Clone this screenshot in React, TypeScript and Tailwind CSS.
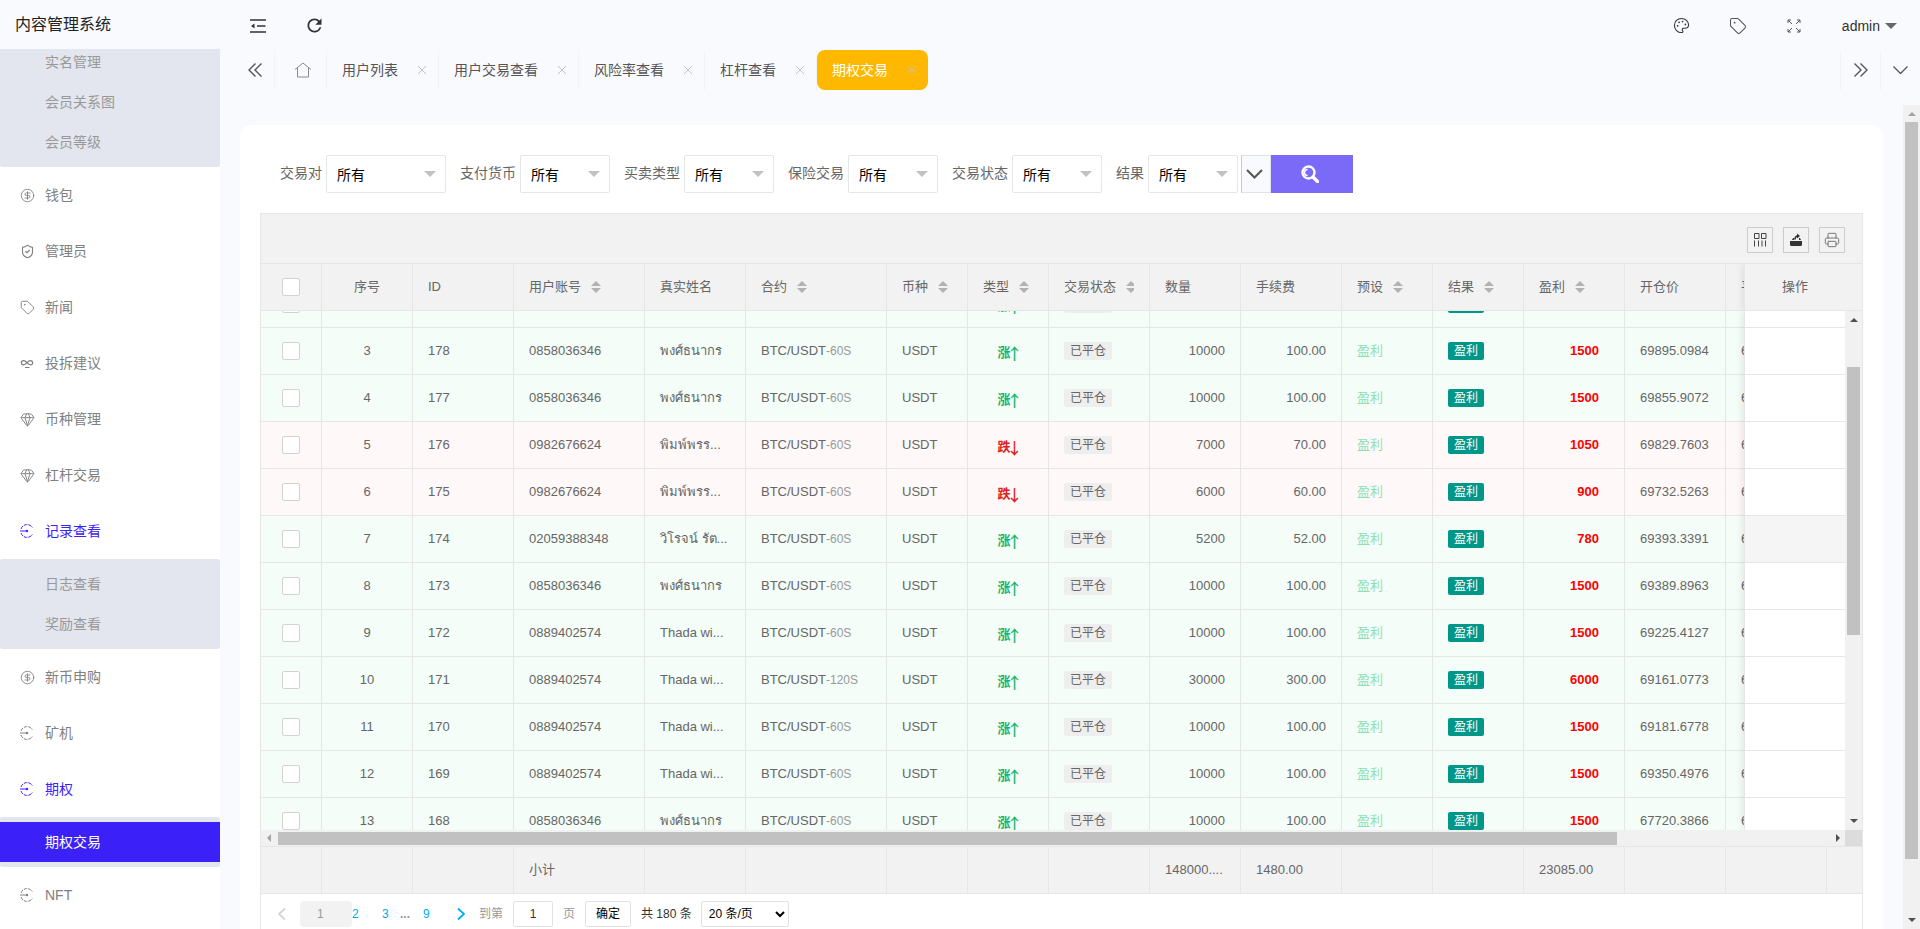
import { useState } from "react";
import type { ReactNode } from "react";
import { CircleDollarSign, Gem, Palette, Printer, ShieldCheck, Tag } from "lucide-react";
import { MdRefresh } from "react-icons/md";
import clsx from "clsx";

type Row = {
  no: string;
  id: string;
  account: string;
  name: string;
  seconds: string;
  up: boolean;
  amount: string;
  fee: string;
  profit: string;
  open: string;
};

const rows: Row[] = [
  { no: "", id: "", account: "", name: "", seconds: "", up: true, amount: "", fee: "", profit: "", open: "" },
  { no: "3", id: "178", account: "0858036346", name: "พงศ์ธนากร", seconds: "-60S", up: true, amount: "10000", fee: "100.00", profit: "1500", open: "69895.0984" },
  { no: "4", id: "177", account: "0858036346", name: "พงศ์ธนากร", seconds: "-60S", up: true, amount: "10000", fee: "100.00", profit: "1500", open: "69855.9072" },
  { no: "5", id: "176", account: "0982676624", name: "พิมพ์พรร...", seconds: "-60S", up: false, amount: "7000", fee: "70.00", profit: "1050", open: "69829.7603" },
  { no: "6", id: "175", account: "0982676624", name: "พิมพ์พรร...", seconds: "-60S", up: false, amount: "6000", fee: "60.00", profit: "900", open: "69732.5263" },
  { no: "7", id: "174", account: "02059388348", name: "วิโรจน์ รัต...", seconds: "-60S", up: true, amount: "5200", fee: "52.00", profit: "780", open: "69393.3391" },
  { no: "8", id: "173", account: "0858036346", name: "พงศ์ธนากร", seconds: "-60S", up: true, amount: "10000", fee: "100.00", profit: "1500", open: "69389.8963" },
  { no: "9", id: "172", account: "0889402574", name: "Thada wi...", seconds: "-60S", up: true, amount: "10000", fee: "100.00", profit: "1500", open: "69225.4127" },
  { no: "10", id: "171", account: "0889402574", name: "Thada wi...", seconds: "-120S", up: true, amount: "30000", fee: "300.00", profit: "6000", open: "69161.0773" },
  { no: "11", id: "170", account: "0889402574", name: "Thada wi...", seconds: "-60S", up: true, amount: "10000", fee: "100.00", profit: "1500", open: "69181.6778" },
  { no: "12", id: "169", account: "0889402574", name: "Thada wi...", seconds: "-60S", up: true, amount: "10000", fee: "100.00", profit: "1500", open: "69350.4976" },
  { no: "13", id: "168", account: "0858036346", name: "พงศ์ธนากร", seconds: "-60S", up: true, amount: "10000", fee: "100.00", profit: "1500", open: "67720.3866" },
];

const columns = [
  { title: "", width: 61 },
  { title: "序号", width: 91, center: true },
  { title: "ID", width: 101 },
  { title: "用户账号", width: 131, sort: true },
  { title: "真实姓名", width: 101 },
  { title: "合约", width: 141, sort: true },
  { title: "币种", width: 81, sort: true },
  { title: "类型", width: 81, sort: true },
  { title: "交易状态", width: 101, sort: true },
  { title: "数量", width: 91, total: "148000...." },
  { title: "手续费", width: 101, total: "1480.00" },
  { title: "预设", width: 91, sort: true },
  { title: "结果", width: 91, sort: true },
  { title: "盈利", width: 101, sort: true, total: "23085.00" },
  { title: "开仓价", width: 101 },
  { title: "平仓价", width: 101 },
  { title: "", width: 101 },
];

const filters = [
  { id: "pair", label: "交易对", wide: true },
  { id: "currency", label: "支付货币" },
  { id: "side", label: "买卖类型" },
  { id: "insurance", label: "保险交易" },
  { id: "status", label: "交易状态" },
  { id: "result", label: "结果" },
];

const tabs = ["用户列表", "用户交易查看", "风险率查看", "杠杆查看", "期权交易"];

const RecordIcon = () => (
  <svg width="14" height="14" viewBox="0 0 14 14" fill="none" stroke="currentColor">
    <path d="M1 5a6.3 6.3 0 0 1 11.5-1.2M1 9a6.3 6.3 0 0 0 11.5 1.2" strokeDasharray="3.6 1" />
    <path d="M0 7h7" />
    <circle cx="7" cy="7" r="1.2" fill="currentColor" stroke="none" />
  </svg>
);

const LoopIcon = () => (
  <svg width="14" height="14" viewBox="0 0 14 14" fill="none" stroke="currentColor" strokeWidth="1.2">
    <path d="M7 6.7C5.8 5.2 4.800 4.600 3.500 4.600a2.100 2.100 0 0 0 0 4.200C4.800 8.800 5.800 8 7 6.700S9.300 4.600 10.500 4.600a2.100 2.100 0 0 1 0 4.200C9.300 8.800 8.400 8.300 7 6.700z" />
    <path d="M5 11.500h4.500" strokeWidth="1" />
  </svg>
);

const ExpandIcon = () => (
  <svg width="14" height="14" viewBox="0 0 14 14" fill="none" stroke="#555">
    <path d="M1 4V1h3M1 1l4 4M10 1h3v3M13 1L9 5M13 10v3h-3M13 13L9 9M4 13H1v-3M1 13l4-4" />
  </svg>
);

const Chevrons = ({ right }: { right?: boolean }) => (
  <svg width="14" height="14" viewBox="0 0 14 14" fill="none" stroke="#555" strokeWidth="1.4">
    {right ? <path d="M0.500 0.500L7 7 0.500 13.500M6.500 0.500L13 7 6.500 13.500" /> : <path d="M7.500 0.500L1 7l6.500 6.500M13.500 0.500L7 7l6.500 6.500" />}
  </svg>
);

const Caret = ({ dir, color }: { dir: "up" | "down" | "left" | "right"; color: string }) => {
  const points = { up: "0,4 4,0 8,4", down: "0,0 8,0 4,4", left: "4,0 4,8 0,4", right: "0,0 4,4 0,8" }[dir];
  const flat = dir === "up" || dir === "down";
  return (
    <svg width={flat ? 8 : 4} height={flat ? 4 : 8} fill={color}>
      <polygon points={points} />
    </svg>
  );
};

const Check = ({ label }: { label: string }) => (
  <input
    type="checkbox"
    aria-label={label}
    className="block mx-auto w-[18px] h-[18px] appearance-none bg-white border border-[#d2d2d2] rounded-xs checked:bg-[#009688]"
  />
);

const ColGroup = () => (
  <colgroup>
    {columns.map((c, i) => (
      <col key={i} style={{ width: c.width }} />
    ))}
  </colgroup>
);

const cell = "border-r border-b border-[#e6e6e6] px-[15px] whitespace-nowrap overflow-hidden";

function MenuItem({ icon, text, active }: { icon: ReactNode; text: string; active?: boolean }) {
  return (
    <a href="#" className={clsx("flex items-center h-14 pl-5 text-sm", active ? "text-[#3c20f8]" : "text-[#808080]")}>
      <span className="w-[25px]">{icon}</span>
      {text}
    </a>
  );
}

function SubItem({ text, active }: { text: string; active?: boolean }) {
  return (
    <a href="#" className={clsx("flex shrink-0 items-center h-10 pl-[45px] text-sm", active ? "bg-[#3c20f8] text-white" : "text-[#999]")}>
      {text}
    </a>
  );
}

function Sidebar() {
  return (
    <aside className="w-[220px] shrink-0 bg-white">
      <div className="h-[49px] pl-[15px] flex items-center bg-[#f9fafe] text-base text-[#222]">内容管理系统</div>
      <nav>
        <div className="h-[118px] pb-[5px] flex flex-col justify-end overflow-hidden bg-[#e3e6ee] rounded-b-xs">
          <SubItem text="实名管理" />
          <SubItem text="会员关系图" />
          <SubItem text="会员等级" />
        </div>
        <MenuItem icon={<CircleDollarSign size={15} strokeWidth={1.4} />} text="钱包" />
        <MenuItem icon={<ShieldCheck size={15} strokeWidth={1.8} />} text="管理员" />
        <MenuItem icon={<Tag size={15} strokeWidth={1.5} />} text="新闻" />
        <MenuItem icon={<LoopIcon />} text="投拆建议" />
        <MenuItem icon={<Gem size={15} strokeWidth={1.5} />} text="币种管理" />
        <MenuItem icon={<Gem size={15} strokeWidth={1.5} />} text="杠杆交易" />
        <MenuItem icon={<RecordIcon />} text="记录查看" active />
        <div className="py-[5px] bg-[#e3e6ee] rounded-xs">
          <SubItem text="日志查看" />
          <SubItem text="奖励查看" />
        </div>
        <MenuItem icon={<CircleDollarSign size={15} strokeWidth={1.4} />} text="新币申购" />
        <MenuItem icon={<RecordIcon />} text="矿机" />
        <MenuItem icon={<RecordIcon />} text="期权" active />
        <div className="py-[5px] bg-[#e3e6ee] rounded-xs">
          <SubItem text="期权交易" active />
        </div>
        <MenuItem icon={<RecordIcon />} text="NFT" />
      </nav>
    </aside>
  );
}

function TopBar() {
  return (
    <header className="flex items-center h-[50px] pt-px pl-[10px] text-[#333]">
      <button aria-label="收起菜单" className="flex justify-center w-14">
        <svg width="16" height="14" viewBox="0 0 16 14" fill="none" stroke="#333" strokeWidth="1.600">
          <path d="M0 1h16M7 7h8.500M0 13h16" />
          <path d="M1 7l3.500-2.500v5z" fill="#333" stroke="none" />
        </svg>
      </button>
      <button aria-label="刷新" className="flex justify-center w-14">
        <MdRefresh size={21} />
      </button>
      <div className="ml-auto flex items-center">
        <button aria-label="主题" className="flex justify-center w-14"><Palette size={17} strokeWidth={1.5} /></button>
        <button aria-label="便签" className="flex justify-center w-14"><Tag size={18} strokeWidth={1.4} className="text-[#555]" /></button>
        <button aria-label="全屏" className="flex justify-center w-14"><ExpandIcon /></button>
        <button className="flex items-center gap-[5px] pl-5 pr-[23px] text-sm">
          admin
          <svg width="12" height="6" fill="#666"><polygon points="0,0 12,0 6,6" /></svg>
        </button>
      </div>
    </header>
  );
}

function TabBar() {
  const [current, setCurrent] = useState("期权交易");
  return (
    <div className="flex h-10 pl-[15px] text-sm text-[#555]">
      <button aria-label="向左" className="flex items-center justify-center w-10 border-r border-[#f3f3f3]"><Chevrons /></button>
      <button aria-label="首页" className="flex items-center justify-center w-[52px] pl-1 border-r border-[#f3f3f3]">
        <svg width="18" height="16" viewBox="0 0 18 16" fill="none" stroke="#8a8a8a">
          <path d="M1 7.500L9 1l8 6.500M3.500 6v9h11V6" />
        </svg>
      </button>
      {tabs.map((t) => (
        <div
          key={t}
          className={clsx(
            "flex items-center pl-[15px] pr-3",
            t === current ? "bg-[#ffb800] text-white rounded-lg" : "border-r border-[#f3f3f3]"
          )}
        >
          <button onClick={() => setCurrent(t)}>{t}</button>
          <button aria-label={`关闭${t}`} className="pl-5">
            <svg width="8" height="8" stroke="#c2c2c2"><path d="M0 0L8 8M8 0L0 8" /></svg>
          </button>
        </div>
      ))}
      <div className="ml-auto flex">
        <button aria-label="向右" className="flex items-center justify-center w-10 border-l border-[#f3f3f3]"><Chevrons right /></button>
        <button aria-label="更多" className="flex items-center justify-center w-10 border-l border-[#f3f3f3]">
          <svg width="15" height="8" fill="none" stroke="#555" strokeWidth="1.300"><path d="M0.500 0.500l7 7 7-7" /></svg>
        </button>
      </div>
    </div>
  );
}

function FilterBar() {
  return (
    <form className="flex items-center h-[38px] pl-5 text-sm text-[#666]" onSubmit={(e) => e.preventDefault()}>
      {filters.map((f, i) => (
        <div key={f.id} className={clsx("flex items-center gap-1", i > 0 && "ml-[14px]")}>
          <label htmlFor={f.id} className="pb-0.5">{f.label}</label>
          <div className="relative">
            <select
              id={f.id}
              className={clsx("block h-[38px] pl-[10px] pt-px appearance-none bg-white border border-[#e6e6e6] rounded-xs text-black", f.wide ? "w-[120px]" : "w-[90px]")}
            >
              <option>所有</option>
            </select>
            <svg width="12" height="6" fill="#c2c2c2" className="absolute right-[10px] top-4 pointer-events-none"><polygon points="0,0 12,0 6,6" /></svg>
          </div>
        </div>
      ))}
      <button type="button" aria-label="展开" className="flex items-center justify-center ml-[3px] w-[30px] h-[38px] pr-1 bg-[#f9fafe] border border-[#dfe2e8] border-l-[#c9c9c9]">
        <svg width="17" height="10" fill="none" stroke="#555" strokeWidth="2"><path d="M1 1l7.500 7.500L16 1" /></svg>
      </button>
      <button type="submit" aria-label="搜索" className="flex items-center justify-center w-[82px] h-[38px] pr-1 bg-[#7b69f7]">
        <svg width="18" height="18" viewBox="0 0 18 18" fill="none" stroke="#fff">
          <circle cx="7.500" cy="7.500" r="6" strokeWidth="2.400" />
          <path d="M12 12l4.500 4.500" strokeWidth="3.400" strokeLinecap="round" />
          <path d="M6.500 4.500a3 3 0 0 0 0 6" strokeWidth="1.400" />
        </svg>
      </button>
    </form>
  );
}

function ToolButtons() {
  const box = "flex items-center justify-center w-[26px] h-[26px] border border-[#ccc] text-[#333]";
  return (
    <div className="flex items-center justify-end gap-[10px] h-[50px] pt-0.5 pr-[17px] border-b border-[#e6e6e6]">
      <button aria-label="筛选列" className={box}>
        <svg width="14" height="14" viewBox="0 0 14 14" fill="none" stroke="#444">
          <path d="M1.500 0.500h4.500v5h-4.500zM8.500 0.500h4.500v5h-4.500zM1.500 7.500v6M5.500 7.500v6M9 7.500v6M12.500 7.500v6" />
        </svg>
      </button>
      <button aria-label="导出" className={box}>
        <svg width="14" height="14" viewBox="0 0 14 14" fill="#333">
          <path d="M1 8h12v3.500a1.500 1.500 0 0 1-1.500 1.500h-9A1.500 1.500 0 0 1 1 11.500zM3 7l1-2h1.500L5 7zM10 7h2l-1-2h-1z" />
          <path d="M6 6.500c0-2.500 1-3.500 3-3.500" fill="none" stroke="#333" strokeWidth="1.500" />
          <path d="M8 0.500L11 3 8 5.500z" />
        </svg>
      </button>
      <button aria-label="打印" className={box}><Printer size={16} strokeWidth={1.500} className="text-[#777]" /></button>
    </div>
  );
}

function DataTable() {
  return (
    <div className="flex-1 bg-white border border-b-0 border-[#e6e6e6] text-[13px] text-[#666]">
      <div className="bg-[#f2f2f2]">
        <ToolButtons />
        <div className="flex overflow-hidden">
          <div className="flex-1 min-w-0 overflow-hidden">
            <table className="table-fixed w-[1665px] border-separate border-spacing-0">
              <ColGroup />
              <thead>
                <tr className="h-[47px]">
                  {columns.map((c, i) => (
                    <th key={i} className={clsx(cell, "font-normal", c.center ? "text-center" : "text-left")}>
                      {i === 0 ? (
                        <Check label="全选" />
                      ) : (
                        <span className={clsx("items-center gap-[10px]", c.center ? "inline-flex" : "flex")}>
                          {c.title}
                          {c.sort && (
                            <svg width="10" height="12" fill="#b2b2b2"><polygon points="0,5 5,0 10,5" /><polygon points="0,7 10,7 5,12" /></svg>
                          )}
                        </span>
                      )}
                    </th>
                  ))}
                </tr>
              </thead>
            </table>
          </div>
          <div className="relative flex items-center w-[118px] h-[47px] bg-[#f2f2f2] border-l border-b border-[#e6e6e6] shadow-[-1px_0_8px_rgba(0,0,0,0.1)]">
            <span className="w-[100px] text-center">操作</span>
          </div>
        </div>
      </div>

      <div className="flex h-[519px] overflow-hidden">
        <div className="flex-1 min-w-0 overflow-hidden">
          <table className="table-fixed w-[1665px] -mt-[30px] border-separate border-spacing-0">
            <ColGroup />
            <tbody>
              {rows.map((r) => (
                <tr key={r.no} className={clsx("h-[47px]", r.up ? "bg-[#f4fdf8]" : "bg-[#fff8f8]")}>
                  <td className={cell}><Check label={`选择 ${r.id}`} /></td>
                  <td className={clsx(cell, "text-center")}>{r.no}</td>
                  <td className={cell}>{r.id}</td>
                  <td className={cell}>{r.account}</td>
                  <td className={cell}>{r.name}</td>
                  <td className={cell}>{r.id && "BTC/USDT"}<span className="text-xs text-[#999]">{r.seconds}</span></td>
                  <td className={cell}>{r.id && "USDT"}</td>
                  <td className={clsx(cell, r.up ? "text-[#16b368]" : "text-[#e02020]")}>
                    <span className="flex items-center justify-center h-5 pt-1">
                      <b>{r.up ? "涨" : "跌"}</b>
                      <span className="flex justify-center w-2 text-base font-medium font-['Noto_Sans_CJK_SC',sans-serif]">{r.up ? "↑" : "↓"}</span>
                    </span>
                  </td>
                  <td className={cell}><span className="block w-12 h-[18px] leading-[18px] text-center text-xs bg-[#eee] rounded-xs">已平仓</span></td>
                  <td className={clsx(cell, "text-right")}>{r.amount}</td>
                  <td className={clsx(cell, "text-right")}>{r.fee}</td>
                  <td className={clsx(cell, "text-[#8fdfb5]")}>{r.id && "盈利"}</td>
                  <td className={cell}><span className="block w-9 h-[18px] leading-[18px] text-center text-xs bg-[#009688] text-white rounded-xs">盈利</span></td>
                  <td className={clsx(cell, "pr-[25px] text-right font-bold text-[#f00]")}>{r.profit}</td>
                  <td className={cell}>{r.open}</td>
                  <td className={cell}>{r.id && "6"}</td>
                  <td className={cell}></td>
                </tr>
              ))}
            </tbody>
          </table>
        </div>
        <div className="relative w-[101px] border-l border-[#e6e6e6] bg-white shadow-[-1px_0_8px_rgba(0,0,0,0.1)]">
          <div className="-mt-[30px]">
            {rows.map((r) => (
              <div key={r.no} className={clsx("h-[47px] border-b border-[#e6e6e6]", r.no === "7" && "bg-[#f5f5f5]")} />
            ))}
          </div>
        </div>
        <div className="relative flex flex-col items-center w-[17px] py-[7px] bg-[#f1f1f1]">
          <Caret dir="up" color="#505050" />
          <div className="w-[13px] h-[268px] mt-[45px] bg-[#c1c1c1]" />
          <span className="mt-auto"><Caret dir="down" color="#505050" /></span>
        </div>
      </div>

      <div className="relative flex h-4 bg-[#f1f1f1]">
        <div className="flex flex-1 items-center pl-[6px] pr-[5px]">
          <Caret dir="left" color="#a3a3a3" />
          <div className="flex-1 mx-[7px]"><div className="w-[86.3%] h-[13px] bg-[#c1c1c1]" /></div>
          <Caret dir="right" color="#505050" />
        </div>
        <div className="w-[17px] bg-[#dcdcdc]" />
      </div>

      <div className="overflow-hidden border-t border-[#e6e6e6] bg-[#f2f2f2]">
        <table className="table-fixed w-[1665px] border-separate border-spacing-0">
          <ColGroup />
          <tbody>
            <tr className="h-[47px]">
              {columns.map((c, i) => (
                <td key={i} className={cell}>{i === 3 ? "小计" : c.total}</td>
              ))}
            </tr>
          </tbody>
        </table>
      </div>

      <div className="flex items-center h-10 pb-px text-xs text-[#999]">
        <button aria-label="上一页" className="w-[39px] pl-[17px]">
          <svg width="8" height="12" fill="none" stroke="#d2d2d2" strokeWidth="1.800"><path d="M7 0.500L1 6l6 5.500" /></svg>
        </button>
        <span className="w-[52px] h-[26px] leading-[26px] pl-[17px] bg-[#f2f2f2] rounded-sm">1</span>
        <a href="#" className="w-[30px] text-[#01aaed]">2</a>
        <a href="#" className="w-[18px] text-[#01aaed]">3</a>
        <span className="w-[23px] font-bold">...</span>
        <a href="#" className="w-[34px] text-[#01aaed]">9</a>
        <button aria-label="下一页" className="w-[22px]">
          <svg width="8" height="12" fill="none" stroke="#01aaed" strokeWidth="1.800"><path d="M1 0.500L7 6l-6 5.500" /></svg>
        </button>
        <label htmlFor="page">到第</label>
        <input id="page" defaultValue="1" className="w-10 h-[26px] mx-[10px] text-center text-[#333] bg-white border border-[#e2e2e2] rounded-xs" />
        <span>页</span>
        <button className="w-[46px] h-[26px] mx-[10px] text-black border border-[#e2e2e2] rounded-xs">确定</button>
        <span className="text-[#333]">共 180 条</span>
        <div className="relative ml-[9px]">
          <select aria-label="每页条数" className="block w-[88px] h-[26px] pl-[7px] appearance-none text-black bg-white border border-[#e2e2e2] rounded-xs">
            <option>20 条/页</option>
          </select>
          <svg width="10" height="7" fill="none" stroke="#000" strokeWidth="2" className="absolute right-1 top-[10px] pointer-events-none"><path d="M1 1l4 4 4-4" /></svg>
        </div>
      </div>
    </div>
  );
}

export default function App() {
  return (
    <div className="flex h-screen overflow-hidden bg-[#f9fafe] font-['Liberation_Sans','Noto_Sans_CJK_SC','Noto_Sans',sans-serif]">
      <Sidebar />
      <div className="flex flex-col flex-1 min-w-0">
        <TopBar />
        <TabBar />
        <div className="flex flex-1 min-h-0 mt-[15px]">
          <main className="flex flex-col flex-1 min-w-0 m-5 mb-0 px-5 pt-[30px] gap-5 bg-white rounded-t-xl">
            <FilterBar />
            <DataTable />
          </main>
          <div className="flex flex-col items-center w-[17px] py-[7px] bg-[#f1f1f1]">
            <Caret dir="up" color="#a3a3a3" />
            <div className="w-[13px] h-[91%] mt-[6px] bg-[#c1c1c1]" />
            <span className="mt-auto"><Caret dir="down" color="#505050" /></span>
          </div>
        </div>
      </div>
    </div>
  );
}
